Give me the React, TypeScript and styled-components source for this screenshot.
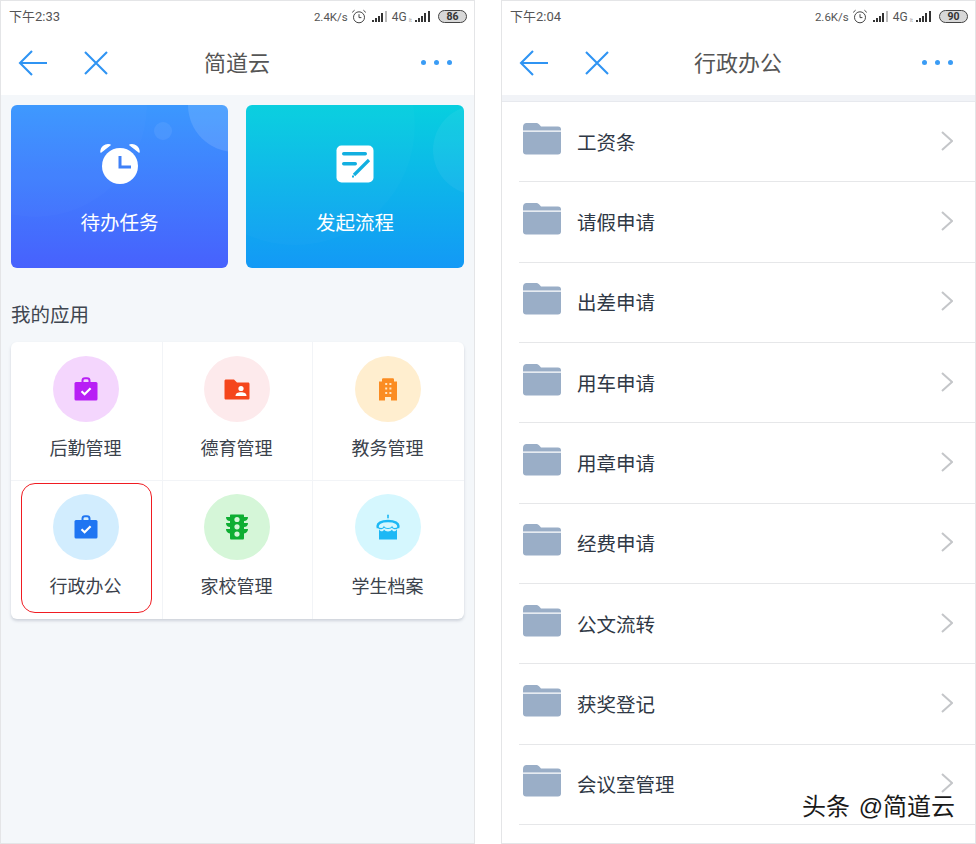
import React from 'react';
import styled, { createGlobalStyle } from 'styled-components';

const GlobalStyle = createGlobalStyle`
  html, body {
    margin: 0;
    padding: 0;
    background: #fff;
    font-family: 'Noto Sans CJK SC', 'Liberation Sans', sans-serif;
  }
  * { box-sizing: border-box; }
`;

const Page = styled.div`
  position: relative;
  width: 976px;
  height: 844px;
  overflow: hidden;
  display: flex;
  justify-content: space-between;
  background: #fff;
`;

const Phone = styled.div<{ $tint?: boolean }>`
  width: 475px;
  height: 844px;
  display: flex;
  flex-direction: column;
  overflow: hidden;
  border: 1px solid #e4e5e7;
  background: ${(p) => (p.$tint ? '#f4f7fa' : '#fff')};
`;

const StatusBar = styled.div`
  height: 31px;
  flex: none;
  padding: 0 7px 0 8px;
  background: #fff;
  display: flex;
  align-items: center;
  justify-content: space-between;
  color: #555;
`;

const Clock = styled.span`
  font-size: 13px;
  line-height: 31px;
  font-family: 'Roboto', 'Noto Sans CJK SC', sans-serif;
`;

const StatusRight = styled.div`
  display: flex;
  align-items: center;
  gap: 3px;
`;

const Speed = styled.span`
  font-family: 'Roboto', sans-serif;
  font-size: 11.5px;
`;

const Network = styled.span`
  font-family: 'Roboto', sans-serif;
  font-size: 12px;
`;

const NetworkTag = styled.span`
  font-size: 5px;
  color: #999;
  margin: 5px -2px 0 -1px;
`;

const Battery = styled.span`
  width: 29px;
  height: 13px;
  margin-left: 3px;
  border: 1px solid #444;
  border-radius: 7px;
  background: #d8d8d8;
  color: #333;
  font-family: 'Roboto', sans-serif;
  font-size: 10.5px;
  font-weight: 700;
  line-height: 11px;
  text-align: center;
`;

const SignalMark = styled.svg`
  margin-left: 2px;
`;

const NavBar = styled.div`
  height: 63px;
  flex: none;
  padding: 0 22px 2px 17px;
  background: #fff;
  display: grid;
  grid-template-columns: 1fr auto 1fr;
  align-items: center;
`;

const NavLeft = styled.div`
  display: flex;
  align-items: center;
  gap: 35px;
`;

const NavTitle = styled.div`
  font-size: 22px;
  color: #555;
  line-height: 30px;
  position: relative;
  left: 2px;
  top: -2px;
`;

const NavRight = styled.div`
  display: flex;
  justify-content: flex-end;
  gap: 8px;
`;

const Dot = styled.span`
  width: 5px;
  height: 5px;
  border-radius: 50%;
  background: #3a9cf5;
`;

const Content = styled.div`
  padding: 10px 9px 0 10px;
`;

const Cards = styled.div`
  display: grid;
  grid-template-columns: 217px 218px;
  gap: 18px;
`;

const ActionCard = styled.div<{ $from: string; $to: string }>`
  position: relative;
  height: 163px;
  border-radius: 6px;
  overflow: hidden;
  background: linear-gradient(180deg, ${(p) => p.$from}, ${(p) => p.$to});
  display: flex;
  flex-direction: column;
  align-items: center;
  padding-top: 38px;
  color: #fff;
`;

const Bubble = styled.span<{ $size: number; $top: number; $right: number; $alpha: number }>`
  position: absolute;
  width: ${(p) => p.$size}px;
  height: ${(p) => p.$size}px;
  top: ${(p) => p.$top}px;
  right: ${(p) => p.$right}px;
  border-radius: 50%;
  background: rgba(255, 255, 255, ${(p) => p.$alpha});
`;

const CardIcon = styled.div`
  position: relative;
  height: 42px;
  display: flex;
  align-items: center;
  justify-content: center;
`;

const CardLabel = styled.div`
  position: relative;
  margin-top: 23px;
  font-size: 19.5px;
  line-height: 28px;
`;

const SectionTitle = styled.div`
  margin-top: 32px;
  font-size: 19.5px;
  line-height: 28px;
  color: #3f4650;
`;

const AppGrid = styled.div`
  margin-top: 14px;
  width: 453px;
  display: grid;
  grid-template-columns: 152px 150px 151px;
  grid-template-rows: 139px 138px;
  background: #fff;
  border-radius: 6px;
  box-shadow: 0 2px 3px rgba(120, 130, 150, 0.3);
`;

const AppCell = styled.div<{ $col: number; $row: number }>`
  position: relative;
  display: flex;
  flex-direction: column;
  align-items: center;
  padding: ${(p) => (p.$row === 0 ? 14 : 13)}px 2px 0 0;
  border-right: ${(p) => (p.$col < 2 ? '1px solid #f2f4f7' : 'none')};
  border-bottom: ${(p) => (p.$row === 0 ? '1px solid #f2f4f7' : 'none')};
`;

const AppCircle = styled.div<{ $bg: string }>`
  width: 66px;
  height: 66px;
  border-radius: 50%;
  background: ${(p) => p.$bg};
  display: flex;
  align-items: center;
  justify-content: center;
`;

const AppLabel = styled.div`
  margin-top: 12px;
  font-size: 18px;
  line-height: 26px;
  color: #3b424c;
`;

const Highlight = styled.div`
  position: absolute;
  left: 10px;
  top: 2px;
  width: 131px;
  height: 130px;
  border: 1px solid #f01c22;
  border-radius: 14px;
`;

const Band = styled.div`
  height: 7px;
  flex: none;
  background: #f1f3f7;
  border-bottom: 1px solid #e7e9ee;
`;

const FolderList = styled.div`
  padding-left: 17px;
  background: #fff;
`;

const FolderRow = styled.div`
  height: 80.35px;
  display: flex;
  align-items: center;
  border-bottom: 1.5px solid #e6e7e9;
  padding: 0 22px 0 4px;
`;

const FolderLabel = styled.div`
  flex: 1;
  margin-left: 16px;
  font-size: 19.5px;
  line-height: 28px;
  color: #2f3845;
`;

const FolderSlot = styled.div`
  height: 32px;
  position: relative;
  top: -3px;
`;

const ChevronSlot = styled.div`
  height: 20px;
  position: relative;
  top: -1px;
`;

const Watermark = styled.div`
  position: absolute;
  right: 21px;
  top: 790px;
  font-family: 'Liberation Sans', 'Noto Sans CJK SC', sans-serif;
  font-size: 24px;
  line-height: 34px;
  word-spacing: 2px;
  color: #1a1a1a;
  text-shadow: 1px 0 0 #fff, -1px 0 0 #fff, 0 1px 0 #fff, 0 -1px 0 #fff;
`;

const Alarm = () => (
  <svg width="16" height="15" viewBox="0 0 16 15" fill="none" stroke="#444" strokeWidth="1">
    <circle cx="8" cy="8.3" r="5.5" />
    <path d="M8 5.2V8.6H10.4M1.2 3.4L3.6 1.2M14.8 3.4L12.4 1.2" />
  </svg>
);

const Signal = ({ dim }: { dim?: boolean }) => (
  <SignalMark width="17" height="13" viewBox="0 0 17 13" fill="#333">
    <rect x="0" y="10" width="2" height="2" />
    <rect x="3" y="8" width="2" height="4" />
    <rect x="6" y="6" width="2" height="6" />
    <rect x="9" y="3" width="2" height="9" />
    <rect x="13" y="1" width="2" height="11" fill={dim ? '#bbb' : '#333'} />
  </SignalMark>
);

const BackIcon = () => (
  <svg width="30" height="28" viewBox="0 0 30 28" fill="none" stroke="#2f94f3" strokeWidth="2.1">
    <path d="M14 2L2 14L14 26M2 14H29" />
  </svg>
);

const CloseIcon = () => (
  <svg width="26" height="26" viewBox="0 0 26 26" fill="none" stroke="#2f94f3" strokeWidth="2.1">
    <path d="M2 2L24 24M24 2L2 24" />
  </svg>
);

const AlarmCard = () => (
  <svg width="40" height="42" viewBox="0 0 40 42">
    <path d="M1 9C1 4 5 1 10 2L1 9ZM39 9C39 4 35 1 30 2L39 9Z" fill="#fff" stroke="#fff" strokeWidth="1.5" strokeLinejoin="round" />
    <circle cx="20" cy="23" r="18" fill="#fff" />
    <path d="M20 13V24H31" fill="none" stroke="#3f80f8" strokeWidth="3" />
  </svg>
);

const NoteCard = () => (
  <svg width="38" height="38" viewBox="0 0 38 38">
    <rect x="0.5" y="0.5" width="37" height="37" rx="5" fill="#fff" />
    <rect x="6" y="7" width="25" height="3.4" rx="1.7" fill="#12afe0" />
    <rect x="6" y="17" width="15" height="3.4" rx="1.7" fill="#12afe0" />
    <path d="M18 30L33 15" stroke="#12afe0" strokeWidth="3.2" />
    <path d="M16 30.5h2v2h-2z" fill="#12afe0" />
  </svg>
);

const Briefcase = ({ color }: { color: string }) => (
  <svg width="24" height="24" viewBox="0 0 24 24">
    <path d="M8.5 5V3.6C8.5 2.2 9.6 1.2 11 1.2H13C14.4 1.2 15.5 2.2 15.5 3.6V5" fill="none" stroke={color} strokeWidth="2" />
    <rect x="0.5" y="5" width="23" height="18.5" rx="1.5" fill={color} />
    <path d="M7.5 14.2L10.6 17.2L16.6 11.2" fill="none" stroke="#fff" strokeWidth="2.2" />
  </svg>
);

const FolderPerson = () => (
  <svg width="26" height="21" viewBox="0 0 26 21">
    <path d="M0.5 2C0.5 1 1.2 0.5 2 0.5H10L13 3.5H24C25 3.5 25.5 4.2 25.5 5V19C25.5 20 25 20.5 24 20.5H2C1 20.5 0.5 20 0.5 19Z" fill="#f5461c" />
    <circle cx="17" cy="9.5" r="2.6" fill="#fff" />
    <path d="M11.5 17C11.5 14 14 13.2 17 13.2C20 13.2 22.5 14 22.5 17Z" fill="#fff" />
  </svg>
);

const Building = () => (
  <svg width="18" height="23" viewBox="0 0 18 23">
    <path d="M0 3.5L3 3.5V1.5C3 0.8 3.6 0.3 4.5 0.3H13.5C14.4 0.3 15 0.8 15 1.5V3.5H18V22.5H12V19H6V22.5H0Z" fill="#fb8c22" />
    {[5, 9.5, 14].map((y) =>
      [6.2, 10.4].map((x) => <rect key={`${x}-${y}`} x={x} y={y} width="2" height="2" fill="#ffe6c4" />)
    )}
  </svg>
);

const TrafficLight = () => (
  <svg width="22" height="26" viewBox="0 0 22 26">
    <path d="M5 0.5H17C17.8 0.5 18 1 18 1.5V3H22C22 5.5 20.5 7 18 7V9H22C22 11.5 20.5 13 18 13V15H22C22 17.5 20.5 19 18 19.5V24C18 25 17.5 25.5 16.5 25.5H5.5C4.5 25.5 4 25 4 24V19.5C1.5 19 0 17.5 0 15H4V13C1.5 13 0 11.5 0 9H4V7C1.5 7 0 5.5 0 3H4V1.5C4 1 4.2 0.5 5 0.5Z" fill="#0fae33" />
    <circle cx="11" cy="5.5" r="2.6" fill="#d5f6d8" />
    <circle cx="11" cy="12.8" r="2.6" fill="#d5f6d8" />
    <circle cx="11" cy="20.1" r="2.6" fill="#d5f6d8" />
  </svg>
);

const Cake = () => (
  <svg width="24" height="26" viewBox="0 0 24 26">
    <rect x="11.2" y="0.5" width="1.6" height="4" rx="0.8" fill="#1cb8f5" />
    <path d="M2 14C0 9 6 7 12 7C18 7 24 9 22 14" fill="none" stroke="#1cb8f5" strokeWidth="2.4" />
    <path d="M3 15C4 18 7.5 18 8 15.5C9.5 18 14.5 18 16 15.5C16.5 18 20 18 21 15V25.5H3Z" fill="#1cb8f5" />
    <path d="M2 13.5C4 15 7 15 8 13C9.5 15 14.5 15 16 13C17 15 20 15 22 13.5" fill="none" stroke="#1cb8f5" strokeWidth="1.2" />
  </svg>
);

const Folder = () => (
  <svg width="38" height="32" viewBox="0 0 38 32">
    <path d="M0 4C0 1.5 1.5 0 3.5 0H13C14.5 0 15.5 0.5 16.5 1.8L18 3.5H35C37 3.5 38 4.8 38 6.5V7.5H0Z" fill="#9aaec7" />
    <path d="M0 8.8H38V28.5C38 30.5 36.8 31.5 35 31.5H3C1.2 31.5 0 30.5 0 28.5Z" fill="#9aaec7" />
  </svg>
);

const Chevron = () => (
  <svg width="12" height="20" viewBox="0 0 12 20" fill="none" stroke="#c4c6c9" strokeWidth="2">
    <path d="M1 1L11 10L1 19" />
  </svg>
);

type StatusProps = { time: string; speed: string; level: string };

const Status = ({ time, speed, level }: StatusProps) => (
  <StatusBar>
    <Clock>{time}</Clock>
    <StatusRight>
      <Speed>{speed}</Speed>
      <Alarm />
      <Signal dim />
      <Network>4G</Network>
      <NetworkTag>lt</NetworkTag>
      <Signal />
      <Battery>{level}</Battery>
    </StatusRight>
  </StatusBar>
);

const Nav = ({ title }: { title: string }) => (
  <NavBar>
    <NavLeft>
      <BackIcon />
      <CloseIcon />
    </NavLeft>
    <NavTitle>{title}</NavTitle>
    <NavRight>
      <Dot />
      <Dot />
      <Dot />
    </NavRight>
  </NavBar>
);

const apps = [
  { label: '后勤管理', bg: '#f4d6fd', icon: <Briefcase color="#b81ff5" /> },
  { label: '德育管理', bg: '#fdeaec', icon: <FolderPerson /> },
  { label: '教务管理', bg: '#ffeecf', icon: <Building /> },
  { label: '行政办公', bg: '#d2edfe', icon: <Briefcase color="#1f75f2" />, marked: true },
  { label: '家校管理', bg: '#d5f6d8', icon: <TrafficLight /> },
  { label: '学生档案', bg: '#d5f7fe', icon: <Cake /> },
];

const folders = ['工资条', '请假申请', '出差申请', '用车申请', '用章申请', '经费申请', '公文流转', '获奖登记', '会议室管理'];

export default function App() {
  return (
    <Page>
      <GlobalStyle />
      <Phone $tint>
        <Status time="下午2:33" speed="2.4K/s" level="86" />
        <Nav title="简道云" />
        <Content>
          <Cards>
            <ActionCard $from="#3b98fe" $to="#4761fd">
              <Bubble $size={224} $top={-112} $right={81} $alpha={0.015} />
              <Bubble $size={94} $top={-47} $right={-54} $alpha={0.12} />
              <Bubble $size={18} $top={17} $right={56} $alpha={0.07} />
              <CardIcon>
                <AlarmCard />
              </CardIcon>
              <CardLabel>待办任务</CardLabel>
            </ActionCard>
            <ActionCard $from="#07cfdf" $to="#1399f6">
              <Bubble $size={240} $top={-100} $right={49} $alpha={0.02} />
              <Bubble $size={90} $top={0} $right={-59} $alpha={0.05} />
              <CardIcon>
                <NoteCard />
              </CardIcon>
              <CardLabel>发起流程</CardLabel>
            </ActionCard>
          </Cards>
          <SectionTitle>我的应用</SectionTitle>
          <AppGrid>
            {apps.map((app, i) => (
              <AppCell key={app.label} $col={i % 3} $row={Math.floor(i / 3)}>
                <AppCircle $bg={app.bg}>{app.icon}</AppCircle>
                <AppLabel>{app.label}</AppLabel>
                {app.marked && <Highlight />}
              </AppCell>
            ))}
          </AppGrid>
        </Content>
      </Phone>
      <Phone>
        <Status time="下午2:04" speed="2.6K/s" level="90" />
        <Nav title="行政办公" />
        <Band />
        <FolderList>
          {folders.map((name) => (
            <FolderRow key={name}>
              <FolderSlot>
                <Folder />
              </FolderSlot>
              <FolderLabel>{name}</FolderLabel>
              <ChevronSlot>
                <Chevron />
              </ChevronSlot>
            </FolderRow>
          ))}
        </FolderList>
      </Phone>
      <Watermark>头条 @简道云</Watermark>
    </Page>
  );
}
